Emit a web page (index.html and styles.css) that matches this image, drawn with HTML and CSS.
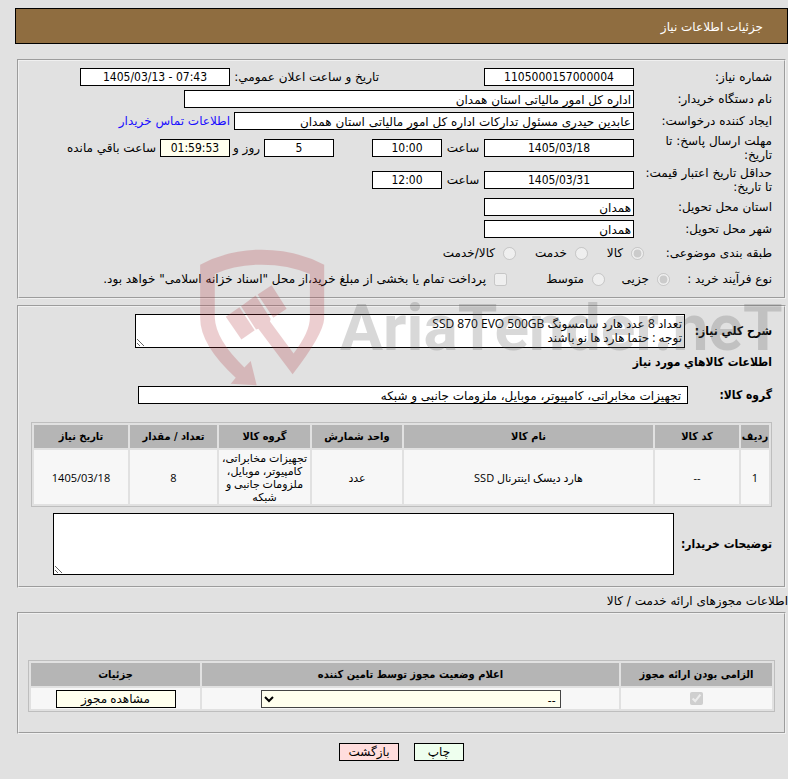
FILE: index.html
```html
<!DOCTYPE html>
<html lang="fa" dir="rtl">
<head>
    <meta charset="UTF-8">
    <meta name="viewport" content="width=device-width, initial-scale=1.0">
    <title>جزئیات اطلاعات نیاز</title>
    <link rel="stylesheet" href="styles.css">
</head>
<body>
    <h1 class="header">جزئیات اطلاعات نیاز</h1>

    <fieldset class="box">
        <div class="row">
            <label class="caption" for="needNo">شماره نیاز:</label>
            <input type="text" class="medium center" id="needNo" value="1105000157000004" readonly>
            <label class="announce" for="announceDate">تاریخ و ساعت اعلان عمومي:</label>
            <input type="text" class="medium center" id="announceDate" dir="ltr" value="1405/03/13 - 07:43" readonly>
        </div>
        <div class="row">
            <label class="caption" for="buyer">نام دستگاه خریدار:</label>
            <input type="text" class="long" id="buyer" value="اداره کل امور مالیاتی استان همدان" readonly>
        </div>
        <div class="row">
            <label class="caption" for="creator">ایجاد کننده درخواست:</label>
            <input type="text" class="wide" id="creator" value="عابدین حیدری مسئول تدارکات اداره کل امور مالیاتی استان همدان" readonly>
            <a class="contact" href="#">اطلاعات تماس خریدار</a>
        </div>
        <div class="row tall">
            <label class="caption" for="replyDate">مهلت ارسال پاسخ: تا<br>تاریخ:</label>
            <input type="text" class="medium center" id="replyDate" value="1405/03/18" readonly>
            <label class="hour" for="replyHour">ساعت</label>
            <input type="text" class="small center" id="replyHour" value="10:00" readonly>
            <input type="text" class="small center days" id="days" value="5" aria-label="روز" readonly>
            <label class="day" for="days">روز و</label>
            <input type="text" class="small center timer" id="remain" value="01:59:53" readonly>
            <label class="remain" for="remain">ساعت باقي مانده</label>
        </div>
        <div class="row tall">
            <label class="caption" for="priceDate">حداقل تاریخ اعتبار قیمت:<br>تا تاریخ:</label>
            <input type="text" class="medium center" id="priceDate" value="1405/03/31" readonly>
            <label class="hour" for="priceHour">ساعت</label>
            <input type="text" class="small center" id="priceHour" value="12:00" readonly>
        </div>
        <div class="row">
            <label class="caption" for="province">استان محل تحویل:</label>
            <input type="text" class="medium" id="province" value="همدان" readonly>
        </div>
        <div class="row">
            <label class="caption" for="city">شهر محل تحویل:</label>
            <input type="text" class="medium" id="city" value="همدان" readonly>
        </div>
        <div class="row options">
            <span class="group-name">طبقه بندی موضوعی:</span>
            <label class="option goods"><input type="radio" name="subject" checked disabled>کالا</label>
            <label class="option service"><input type="radio" name="subject" disabled>خدمت</label>
            <label class="option"><input type="radio" name="subject" disabled>کالا/خدمت</label>
        </div>
        <div class="row options">
            <span class="group-name short">نوع فرآیند خرید :</span>
            <label class="option minor"><input type="radio" name="process" checked disabled>جزیی</label>
            <label class="option average"><input type="radio" name="process" disabled>متوسط</label>
            <label class="option"><input type="checkbox" disabled>پرداخت تمام یا بخشی از مبلغ خرید،از محل "اسناد خزانه اسلامی" خواهد بود.</label>
        </div>
    </fieldset>

    <fieldset class="box goods-box">
        <div class="row">
            <label class="bold summary-label" for="description">شرح کلي نیاز:</label>
            <textarea class="summary" id="description">تعداد 8 عدد هارد سامسونگ SSD 870 EVO 500GB
توجه : حتما هارد ها نو باشند</textarea>
        </div>
        <h2 class="bold">اطلاعات کالاهاي مورد نیاز</h2>
        <div class="row group">
            <label class="bold group-label" for="goodsGroup">گروه کالا:</label>
            <input type="text" class="group-input" id="goodsGroup" value="تجهیزات مخابراتی، کامپیوتر، موبایل، ملزومات جانبی و شبکه" readonly>
        </div>
        <table class="grid goods-table">
            <thead>
                <tr>
                    <th class="col-row">ردیف</th>
                    <th class="col-code">کد کالا</th>
                    <th>نام کالا</th>
                    <th class="col-unit">واحد شمارش</th>
                    <th class="col-group">گروه کالا</th>
                    <th class="col-count">تعداد / مقدار</th>
                    <th class="col-date">تاریخ نیاز</th>
                </tr>
            </thead>
            <tbody>
                <tr>
                    <td>1</td>
                    <td>--</td>
                    <td>هارد دیسک اینترنال SSD</td>
                    <td>عدد</td>
                    <td>تجهیزات مخابراتی، کامپیوتر، موبایل، ملزومات جانبی و شبکه</td>
                    <td>8</td>
                    <td>1405/03/18</td>
                </tr>
            </tbody>
        </table>
        <div class="row notes">
            <label class="bold notes-label" for="notes">توضیحات خریدار:</label>
            <textarea class="notes-text" id="notes"></textarea>
        </div>
    </fieldset>

    <p class="section-title">اطلاعات مجوزهای ارائه خدمت / کالا</p>

    <fieldset class="box permit-box">
        <table class="grid permit-table">
            <thead>
                <tr>
                    <th class="col-required">الزامی بودن ارائه مجوز</th>
                    <th>اعلام وضعیت مجوز توسط تامین کننده</th>
                    <th class="col-details">جزئیات</th>
                </tr>
            </thead>
            <tbody>
                <tr>
                    <td><input type="checkbox" aria-label="الزامی بودن ارائه مجوز" checked disabled></td>
                    <td>
                        <select aria-label="اعلام وضعیت مجوز">
                            <option>--</option>
                        </select>
                    </td>
                    <td><button type="button" class="view">مشاهده مجوز</button></td>
                </tr>
            </tbody>
        </table>
    </fieldset>

    <div class="actions">
        <button type="button" class="print">چاپ</button>
        <button type="button" class="back">بازگشت</button>
    </div>

    <div class="watermark" dir="ltr">
        <svg class="shield" viewBox="60 28 375 412">
            <path d="M60 75 Q145 30 245 30 Q345 30 433 75 V238 Q430 286 338 405 L235 268 L228 270 L183 200 L227 168 L272 238 L270 246 L341 342 Q390 278 390 235 V103 Q325 75 245 75 Q165 75 104 103 V235 Q107 302 193 384 L212 365 L230 438 L152 433 L167 415 Q60 318 60 235 Z"/>
            <path d="M137 232 L178 203 L224 272 L184 300 Z"/>
            <path d="M233 165 L275 137 L320 208 L280 235 Z"/>
        </svg>
        <span class="brand">AriaTender.neT</span>
    </div>
</body>
</html>
```
FILE: styles.css
```css
body {
    position: relative;
    margin: 8px 0 0 15px;
    background-color: #e1e1e1;
    color: #000;
    font-family: "DejaVu Sans", sans-serif;
    font-size: 12px;
    line-height: 14px;
}

.header {
    margin: 0 0 15px;
    padding: 11px 24px 9px;
    border: 1px solid #000;
    background: #8f6d40;
    color: #fff;
    font-size: 12px;
    font-weight: normal;
    line-height: 14px;
}

.box {
    min-width: 0;
    margin: 0 2px 6px;
    padding: 5px 12px;
    border: 2px groove #f0f0f0;
}

.row {
    display: flex;
    align-items: center;
    min-height: 22px;
    white-space: nowrap;
}

.tall {
    min-height: 32px;
}

.caption {
    width: 138px;
}

input, textarea, select, button {
    box-sizing: border-box;
    margin: 0;
    font-family: inherit;
    font-size: 12px;
    line-height: 14px;
}

input[type="text"] {
    height: 18px;
    padding: 1px 2px 0;
    border: 1px solid #000;
    background: #fff;
}

input[type="radio"], input[type="checkbox"] {
    flex: none;
    width: 13px;
    height: 13px;
}

input.center {
    padding-top: 0;
    font-family: "DejaVu Sans Condensed", "DejaVu Sans", sans-serif;
    text-align: center;
}

.small {
    width: 70px;
}

.medium {
    width: 150px;
}

.wide {
    width: 400px;
}

.long {
    width: 450px;
}

.announce {
    width: 149px;
    margin-right: 105px;
}

.contact {
    margin-right: 4px;
    color: #1a0dff;
    text-decoration: none;
}

.hour {
    width: 42px;
    text-align: center;
}

.days {
    margin-right: 38px;
}

.day {
    width: 30px;
    padding-right: 4px;
}

input.timer {
    background: #ffffee;
}

.remain {
    margin-right: 4px;
}

.options {
    min-height: 26px;
}

.group-name {
    width: 128px;
}

.group-name.short {
    width: 102px;
}

.option {
    display: flex;
    align-items: center;
    gap: 8px;
}

.goods {
    width: 56px;
}

.service {
    width: 72px;
}

.minor {
    width: 65px;
}

.average {
    width: 98px;
}

.bold {
    margin: 0;
    font-family: "DejaVu Sans Condensed", "DejaVu Sans", sans-serif;
    font-size: 12px;
    font-weight: bold;
}

textarea {
    padding: 2px;
    border: 1px solid #000;
    background: #fff;
    font-family: "Open Sans", "DejaVu Sans", sans-serif;
}

.goods-box {
    padding-top: 7px;
}

.summary-label {
    width: 87px;
}

.summary {
    width: 550px;
    height: 34px;
    overflow: hidden;
}

.goods-box h2 {
    margin: 7px 0 15px;
}

.group {
    margin-bottom: 16px;
}

.group-label {
    width: 84px;
}

.group-input {
    width: 550px;
}

input.group-input {
    padding: 1px 6px 0;
}

.grid {
    width: 100%;
    border: 1px solid #bebebe;
    border-spacing: 2px;
    table-layout: fixed;
    font-size: 11px;
    line-height: 13px;
}

.grid th {
    height: 23px;
    padding: 0;
    background: #b5b5b5;
    font-family: "DejaVu Sans Condensed", "DejaVu Sans", sans-serif;
}

.grid td {
    padding: 1px 2px;
    background: #f7f7f7;
    font-family: "Open Sans", "DejaVu Sans", sans-serif;
    text-align: center;
}

.col-row {
    width: 28px;
}

.col-code {
    width: 84px;
}

.col-unit {
    width: 90px;
}

.col-group {
    width: 91px;
}

.col-count {
    width: 87px;
}

.col-date {
    width: 94px;
}

.notes {
    margin: 6px 0;
}

.notes-label {
    width: 98px;
}

.notes-text {
    width: 621px;
    height: 62px;
}

.section-title {
    margin: 6px 0 4px;
}

.permit-box {
    padding: 46px 9px 20px;
}

.permit-table td {
    height: 19px;
    padding: 1px;
}

.permit-table input, .permit-table select, .permit-table button {
    display: block;
    margin: 0 auto;
}

.col-required {
    width: 151px;
}

.col-details {
    width: 169px;
}

select {
    width: 300px;
    height: 18px;
    border: 1px solid #444;
    background: #ffffee;
}

button {
    height: 18px;
    padding: 0;
    border: 1px solid #000;
}

.view {
    width: 120px;
    background: #ffffee;
}

.actions {
    display: flex;
    justify-content: center;
    gap: 15px;
    margin: 9px 0 18px;
}

.print {
    width: 50px;
    background: #eeffee;
}

.back {
    width: 60px;
    background: #ffdddd;
}

/* site logo laid over the form */
.watermark {
    position: absolute;
    top: 241px;
    left: 185px;
    right: 0;
    display: flex;
    gap: 15px;
    height: 140px;
    overflow: hidden;
    opacity: 0.23;
    pointer-events: none;
}

.shield {
    flex: none;
    width: 125px;
    height: 137px;
    fill: #b1323a;
}

.brand {
    color: #5a5a5a;
    font-family: Roboto, "Liberation Sans", sans-serif;
    font-size: 64px;
    font-weight: bold;
    line-height: 160px;
}
```
